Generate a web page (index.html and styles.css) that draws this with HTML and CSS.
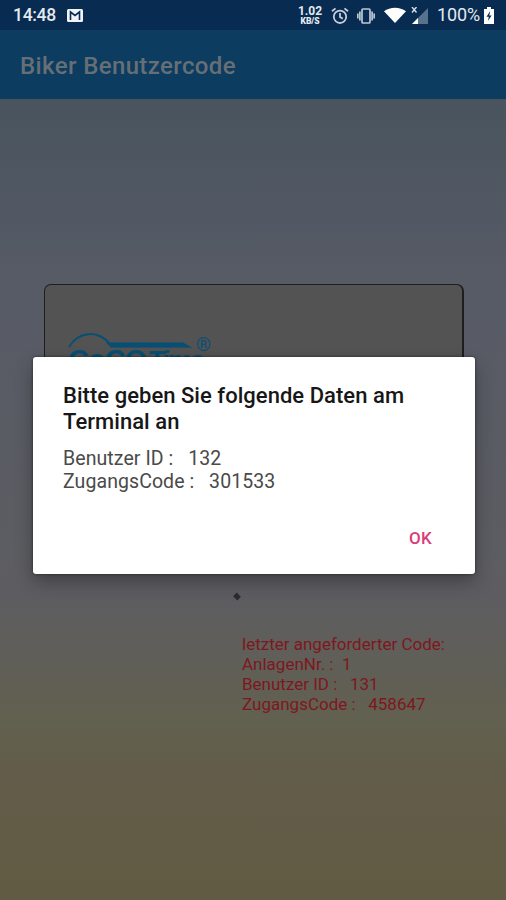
FILE: index.html
```html
<!DOCTYPE html>
<html lang="de">
<head>
<meta charset="utf-8">
<title>Biker Benutzercode</title>
<link rel="stylesheet" href="styles.css">
</head>
<body>
<div class="screen">
  <header class="status">
    <span class="clock">14:48</span>
    <svg class="mail" width="16" height="13" viewBox="0 0 16 13"><rect width="16" height="13" rx="1.5" fill="#f0f3f7"/><path d="M3.5 11V3L8 6.5 12.5 3v8" fill="none" stroke="#082b52" stroke-width="1.6"/></svg>
    <div class="rate"><span class="num">1.02</span><span class="unit">KB/S</span></div>
    <svg class="alarm" width="18" height="18" viewBox="0 0 18 18" fill="none" stroke="#c3ced9" stroke-width="1.8"><circle cx="9" cy="9.8" r="6.2"/><path d="M9 6v4l2.8 1.6M1 4.3 4.5 1.4M17 4.3l-3.5-2.9"/></svg>
    <svg class="vibrate" width="18" height="16" viewBox="0 0 18 16" fill="none" stroke="#bdc9d5" stroke-width="1.7"><rect x="5" y="1" width="8" height="14" rx="1"/><path d="M2.9 3.5v9M15.1 3.5v9M.8 5.5v5M17.2 5.5v5"/></svg>
    <svg class="wifi" width="22" height="17" viewBox="0 0 22 17"><path d="M0 4.3C6-.6 16-.6 22 4.3L11 16z" fill="#fff"/></svg>
    <svg class="signal" width="17" height="17" viewBox="0 0 17 17"><path d="M17 1v16H1z" fill="#58718c"/><path d="M7 11v6H1z" fill="#fff"/><path d="m1 0 4.5 5.5M5.5 0 1 5.5" stroke="#d6dee6" stroke-width="1.4"/></svg>
    <span class="percent">100%</span>
    <svg class="battery" width="10" height="17" viewBox="0 0 10 17"><path d="M3 0h4v2h3v15H0V2h3z" fill="#fff"/><path d="M6.2 4 2.5 9.7h2.3L4 14l3.6-5.6H5.3z" fill="#082b52"/></svg>
  </header>
  <div class="appbar"><h1>Biker Benutzercode</h1></div>
  <main class="content">
    <section class="card">
      <div class="logo">
        <svg class="swoosh" width="126" height="16" viewBox="0 0 126 16"><path d="M1 14C10-1 29-4 42 11" fill="none" stroke="#074f74" stroke-width="2"/><path d="M38 9.5h77l9 5H43z" fill="#074f74"/></svg>
        <span class="reg">®</span>
        <div class="wordmark"><span class="coco">CoCO</span><span class="time">Time</span></div>
      </div>
    </section>
    <div class="speck"></div>
    <div class="last">letzter angeforderter Code:
AnlagenNr. :  1
Benutzer ID :   131
ZugangsCode :   458647</div>
  </main>
  <div class="dialog" role="dialog">
    <h2>Bitte geben Sie folgende Daten am<br>Terminal an</h2>
    <p>Benutzer ID :   132
ZugangsCode :   301533</p>
    <button>OK</button>
  </div>
</div>
</body>
</html>
```
FILE: styles.css
```css
* { box-sizing: border-box; }
body { margin: 0; font-family: Roboto, sans-serif; }
.screen { position: relative; width: 506px; height: 900px; overflow: hidden; display: flex; flex-direction: column; }
.status { height: 30px; flex: none; background: #082b52; display: flex; align-items: center; padding: 1px 12px 0 13px; color: #e4eaf0; }
.status > * { flex: none; }
.clock { width: 43px; font-size: 17.5px; font-weight: 500; line-height: 20px; letter-spacing: -.3px; margin-top: -1px; }
.mail { margin-left: 11px; }
.rate { margin-left: auto; width: 24px; display: flex; flex-direction: column; align-items: center; font-weight: 700; }
.num { font-size: 12px; line-height: 11px; }
.unit { font-size: 8.5px; line-height: 8px; letter-spacing: -.1px; font-weight: 900; }
.alarm { margin-left: 9px; }
.vibrate { margin-left: 8px; }
.wifi { margin-left: 9px; }
.signal { margin-left: 5px; }
.percent { margin-left: 9px; width: 43px; font-size: 18px; line-height: 20px; margin-top: -1px; letter-spacing: -.1px; }
.battery { margin-left: 4px; }
.appbar { height: 69px; flex: none; background: #0c3c60; padding: 21px 20px; }
h1 { margin: 0; font-size: 24px; line-height: 30px; font-weight: 500; color: #676f76; letter-spacing: .38px; }
.content { flex: 1; padding-top: 185px; background: linear-gradient(#49545e 0, #575b66 185px, #5d5d61 500px, #62604f 620px, #625c49 690px, #625b43 100%); }
.card { margin-left: 44px; width: 420px; height: 290px; border: 1px solid #1c1f20; border-right-width: 2px; border-radius: 7px; background: #535353; padding: 47px 0 0 23px; }
.logo { display: grid; grid-template-columns: 127px 20px; grid-template-rows: 16px 30px; color: #074f74; }
.reg { font-size: 19px; line-height: 16px; margin: 5px 0 0 1px; height: 16px; }
.swoosh { margin-top: 1px; }
.wordmark { height: 30px; grid-column: 1 / 3; display: flex; align-items: baseline; line-height: 30px; margin-top: -3px; }
.coco { font: 700 29px/30px "Liberation Sans", sans-serif; letter-spacing: -1px; width: 79px; }
.time { font: italic 700 28px/30px "Liberation Sans", sans-serif; letter-spacing: -2.5px; }
.speck { width: 6px; height: 5px; margin: 20px 0 0 234px; background: #292d2e; transform: rotate(45deg); }
.last { margin: 35px 0 0 242px; font-size: 17px; line-height: 20.15px; white-space: pre; color: #7e1720; }
.dialog { position: absolute; left: 33px; top: 357px; width: 442px; height: 217px; background: #fff; border-radius: 3px; padding: 26px 30px 0; box-shadow: 0 8px 18px rgba(0,0,0,.3), 0 0 3px rgba(0,0,0,.5); }
h2 { margin: 0; font-size: 22px; line-height: 26px; font-weight: 500; color: #171717; white-space: nowrap; letter-spacing: .04px; }
.dialog p { margin: 12px 0 0; font-size: 19.5px; line-height: 23px; white-space: pre; color: #4a4a4a; letter-spacing: .08px; }
button { display: block; margin: 33px 13px 0 auto; padding: 0; border: 0; background: none; font: 500 17px/24px Roboto, sans-serif; color: #d93c7b; letter-spacing: .3px; }
```
